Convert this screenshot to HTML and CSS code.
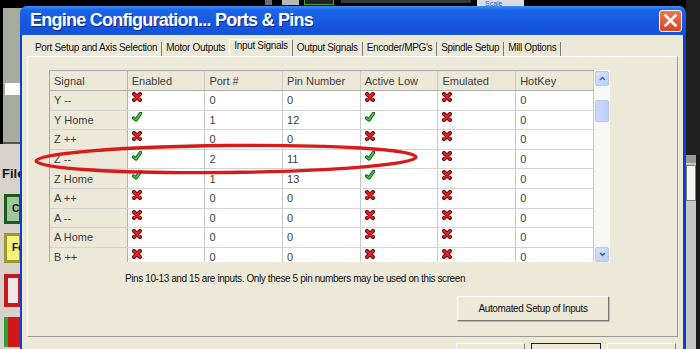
FILE: index.html
```html
<!DOCTYPE html>
<html>
<head>
<meta charset="utf-8">
<link rel="stylesheet" href="styles.css">
</head>
<body>
<div class="screen">
  <div class="topbar">
    <span class="tb tb-a"></span><span class="tb tb-b"></span><span class="tb tb-c"></span><span class="tb tb-d"></span>
    <span class="tb tb-e"></span><span class="tb tb-f">Scale</span>
  </div>
  <div class="app-left">
    <div class="dro"><div class="dro-white"></div></div>
    <div class="app-lower">
      <div class="file">File</div>
      <div class="abtn abtn-green">Cyc</div>
      <div class="abtn abtn-yellow">Fe</div>
      <div class="abtn abtn-red"></div>
      <div class="abtn abtn-last"></div>
    </div>
  </div>
  <div class="app-right">
    <div class="rs-dark"></div>
    <div class="rs-scroll"><div class="rs-arrow"></div><div class="rs-thumb"></div></div>
  </div>

  <div class="dialog">
    <div class="titlebar">
      <span class="title">Engine Configuration... Ports &amp; Pins</span>
      <span class="close"><svg width="15" height="15" viewBox="0 0 15 15"><path d="M2.5 2.5 L12.5 12.5 M12.5 2.5 L2.5 12.5" stroke="#fff" stroke-width="2.6" stroke-linecap="square"/></svg></span>
    </div>
    <div class="body">
      <div class="tabs">
        <span class="tab">Port Setup and Axis Selection</span>
        <span class="tab nosep">Motor Outputs</span>
        <span class="tab active">Input Signals</span>
        <span class="tab">Output Signals</span>
        <span class="tab">Encoder/MPG's</span>
        <span class="tab">Spindle Setup</span>
        <span class="tab">Mill Options</span>
      </div>
      <div class="panel">
        <div class="gridwrap">
          <div class="grid">
            <div class="row head"><span class="c h">Signal</span><span class="c">Enabled</span><span class="c">Port #</span><span class="c">Pin Number</span><span class="c">Active Low</span><span class="c">Emulated</span><span class="c">HotKey</span></div>
            <div class="row"><span class="c h">Y --</span><span class="c"><i class="x"></i></span><span class="c">0</span><span class="c">0</span><span class="c"><i class="x"></i></span><span class="c"><i class="x"></i></span><span class="c">0</span></div>
            <div class="row"><span class="c h">Y Home</span><span class="c"><i class="ok"></i></span><span class="c">1</span><span class="c">12</span><span class="c"><i class="ok"></i></span><span class="c"><i class="x"></i></span><span class="c">0</span></div>
            <div class="row"><span class="c h">Z ++</span><span class="c"><i class="x"></i></span><span class="c">0</span><span class="c">0</span><span class="c"><i class="x"></i></span><span class="c"><i class="x"></i></span><span class="c">0</span></div>
            <div class="row"><span class="c h">Z --</span><span class="c"><i class="ok"></i></span><span class="c">2</span><span class="c">11</span><span class="c"><i class="ok"></i></span><span class="c"><i class="x"></i></span><span class="c">0</span></div>
            <div class="row"><span class="c h">Z Home</span><span class="c"><i class="ok"></i></span><span class="c">1</span><span class="c">13</span><span class="c"><i class="ok"></i></span><span class="c"><i class="x"></i></span><span class="c">0</span></div>
            <div class="row"><span class="c h">A ++</span><span class="c"><i class="x"></i></span><span class="c">0</span><span class="c">0</span><span class="c"><i class="x"></i></span><span class="c"><i class="x"></i></span><span class="c">0</span></div>
            <div class="row"><span class="c h">A --</span><span class="c"><i class="x"></i></span><span class="c">0</span><span class="c">0</span><span class="c"><i class="x"></i></span><span class="c"><i class="x"></i></span><span class="c">0</span></div>
            <div class="row"><span class="c h">A Home</span><span class="c"><i class="x"></i></span><span class="c">0</span><span class="c">0</span><span class="c"><i class="x"></i></span><span class="c"><i class="x"></i></span><span class="c">0</span></div>
            <div class="row"><span class="c h">B ++</span><span class="c"><i class="x"></i></span><span class="c">0</span><span class="c">0</span><span class="c"><i class="x"></i></span><span class="c"><i class="x"></i></span><span class="c">0</span></div>
          </div>
          <div class="vscroll">
            <div class="sbtn"><svg width="7" height="5" viewBox="0 0 7 5"><path d="M1 4 L3.5 1.5 L6 4" fill="none" stroke="#4d6185" stroke-width="1.4"/></svg></div>
            <div class="strack"><div class="sthumb"></div></div>
            <div class="sbtn"><svg width="7" height="5" viewBox="0 0 7 5"><path d="M1 1 L3.5 3.5 L6 1" fill="none" stroke="#4d6185" stroke-width="1.4"/></svg></div>
          </div>
        </div>
        <p class="note">Pins 10-13 and 15 are inputs. Only these 5 pin numbers may be used on this screen</p>
        <div class="autorow"><button class="btn">Automated Setup of Inputs</button></div>
      </div>
      <div class="dlgbtns"><span class="dbtn"></span><span class="dbtn def"></span><span class="dbtn"></span></div>
    </div>
    <svg class="ring" width="420" height="50" viewBox="0 0 420 50"><ellipse cx="193" cy="24" rx="190" ry="13.5" transform="rotate(-0.6 193 24)" fill="none" stroke="#d71a1a" stroke-width="3.4"/></svg>
  </div>
</div>
</body>
</html>
```
FILE: styles.css
```css
* { box-sizing: border-box; }
html, body { margin: 0; padding: 0; }
body { width: 700px; height: 349px; overflow: hidden; background: #000; font-family: "Liberation Sans", Arial, sans-serif; }
.screen { position: relative; width: 700px; height: 349px; overflow: hidden; background: #000; }

.topbar { height: 8px; display: flex; align-items: flex-start; }
.tb { display: block; height: 5px; }
.tb-a { margin-left: 265px; width: 7px; background: #6c6c6c; }
.tb-b { margin-left: 10px; width: 17px; background: #b8b8b8; }
.tb-c { margin-left: 5px; width: 30px; border: 1px solid #3fa13f; border-top: 0; background: #222; }
.tb-d { margin-left: 7px; width: 130px; height: 3px; background: #3a3a3a; }
.tb-e { margin-left: 3px; width: 1px; }
.tb-f { margin-left: 2px; width: 47px; height: 8px; background: #d9dce6; color: #3758a8; font-size: 7px; line-height: 8px; overflow: hidden; padding-left: 8px; }

.app-left { position: absolute; left: 0; top: 8px; width: 22px; height: 341px; display: flex; flex-direction: column; }
.dro { height: 136px; margin-left: 3px; background: #a6ab9d; padding-top: 75px; border-bottom: 2px solid #555; }
.dro-white { height: 12px; background: #fff; margin-left: 2px; }
.app-lower { flex: 1; background: #d7d3ca; display: flex; flex-direction: column; padding-left: 4px; }
.file { font-weight: bold; font-size: 13px; margin: 22px 0 0 -2px; color: #111; height: 18px; }
.abtn { height: 30px; margin-top: 10px; font-size: 10px; font-weight: bold; padding: 6px 0 0 5px; color: #111; }
.abtn-green { margin-top: 10px; background: #9fc79a; border: 3px solid #1e5a1e; }
.abtn-yellow { margin-top: 9px; background: #f7f27c; border: 3px solid #9a9a32; height: 30px; }
.abtn-red { margin-top: 11px; background: #f4e6e6; border: 4px solid #c11a1a; height: 33px; }
.abtn-last { margin-top: 10px; height: 30px; background: #d21818; border-left: 4px solid #2ea12e; }

.app-right { position: absolute; left: 686px; top: 0; width: 14px; height: 349px; display: flex; flex-direction: column; background: #1a1a1a; }
.rs-dark { height: 155px; background: #202020; }
.rs-scroll { flex: 1; width: 10px; background: #c6c6c2; display: flex; flex-direction: column; }
.rs-arrow { height: 8px; background: #9a9a9a; }
.rs-thumb { height: 36px; margin-top: 2px; background: #f4f4f2; border: 1px solid #808080; }

.dialog { position: absolute; left: 20px; top: 6px; width: 666px; height: 360px; display: flex; flex-direction: column; }
.titlebar { height: 29px; border-radius: 7px 7px 0 0; background: linear-gradient(#3d8ff6 0, #1c64e8 4px, #1659e0 55%, #1452d8 100%); display: flex; align-items: center; justify-content: space-between; padding: 0 4px 0 10px; }
.title { color: #fff; font-family: "Liberation Sans", Arial, sans-serif; font-weight: bold; font-size: 18px; letter-spacing: -0.75px; text-shadow: 1px 1px 0 #0a2a8a; }
.close { width: 23px; height: 22px; border: 1px solid #fff; border-radius: 3px; background: linear-gradient(#ea7a55, #d9431f); display: flex; align-items: center; justify-content: center; }

.body { flex: 1; background: #ece9d8; border-left: 2px solid #0b3fd0; border-right: 3px solid #0b3fd0; padding: 4px 0 0 5px; }
.tabs { display: flex; height: 17px; padding-left: 4px; align-items: flex-end; }
.tab { font-size: 10px; letter-spacing: -0.33px; color: #111; padding: 0 4px 3px 4px; line-height: 11px; border-right: 1px solid #7c7c7c; height: 14px; }
.tab.nosep { border-right: 0; }
.tab.active { height: 17px; padding-bottom: 5px; border-left: 1px solid #fff; border-top: 1px solid #fff; background: #ece9d8; }

.panel { width: 651px; height: 281px; border: 1px solid #fff; border-right-color: #9c9a8e; border-bottom-color: #9c9a8e; padding: 13px 0 0 21px; display: flex; flex-direction: column; }
.gridwrap { display: flex; height: 192px; }
.grid { width: 545px; height: 192px; overflow: hidden; border-left: 1px solid #a9a9a9; border-top: 1px solid #a9a9a9; background: #fff; }
.row { display: flex; height: 19.6px; border-bottom: 1px solid #d4d4d4; }
.row.head { height: 20px; background: #ece9d8; border-bottom-color: #b0b0b0; }
.c { width: 77.7px; flex: none; border-right: 1px solid #c9c9c9; font-size: 11px; color: #3c3c3c; padding: 0 4px; display: flex; align-items: center; position: relative; }
.c.h { background: #ece9d8; border-right-color: #b0b0b0; }
.x, .ok { position: absolute; left: 4px; top: 1px; width: 10px; height: 10px; }
.x { background: url("data:image/svg+xml;utf8,<svg xmlns='http://www.w3.org/2000/svg' viewBox='0 0 10 10'><path d='M2 2 L8 8 M8 2 L2 8' stroke='%235a0606' stroke-width='4' stroke-linecap='round'/><path d='M2 2 L8 8 M8 2 L2 8' stroke='%23e02424' stroke-width='2.2' stroke-linecap='round'/></svg>") no-repeat; }
.ok { background: url("data:image/svg+xml;utf8,<svg xmlns='http://www.w3.org/2000/svg' viewBox='0 0 10 10'><path d='M1.5 6 L4 8 L8.5 1.5' fill='none' stroke='%23145214' stroke-width='3.4' stroke-linejoin='round' stroke-linecap='round'/><path d='M1.5 6 L4 8 L8.5 1.5' fill='none' stroke='%2342d142' stroke-width='1.6' stroke-linejoin='round' stroke-linecap='round'/></svg>") no-repeat; }

.vscroll { width: 16px; height: 192px; background: #f7f7f3; display: flex; flex-direction: column; padding: 1px 1px 0 1px; }
.sbtn { height: 15px; background: linear-gradient(135deg, #d6e2fd, #b9cdf8); border: 1px solid #b7c9ee; border-radius: 2px; display: flex; align-items: center; justify-content: center; }
.strack { flex: 1; padding-top: 14px; }
.sthumb { height: 22px; background: linear-gradient(90deg, #cbd9fb, #bccff8); border: 1px solid #b5c7ee; border-radius: 2px; }

.note { margin: 11px 0 0 76px; font-size: 10px; letter-spacing: -0.4px; color: #111; line-height: 12px; }
.autorow { display: flex; justify-content: flex-end; padding-right: 68px; margin-top: 11px; }
.btn { width: 152px; height: 25px; font-family: "Liberation Sans", Arial, sans-serif; font-size: 10px; letter-spacing: -0.37px; color: #111; background: #ece9d8; border: 1px solid #fff; border-right-color: #7d7b70; border-bottom-color: #7d7b70; box-shadow: 1px 1px 0 #b9b6aa; padding: 0; }

.dlgbtns { display: flex; padding-left: 429px; margin-top: 6px; gap: 6px; }
.dbtn { width: 69px; height: 12px; background: #ece9d8; border: 1px solid #fff; border-right-color: #7d7b70; }
.dbtn.def { width: 70px; border: 1px solid #222; }

.ring { position: absolute; left: 13px; top: 129px; }
```
